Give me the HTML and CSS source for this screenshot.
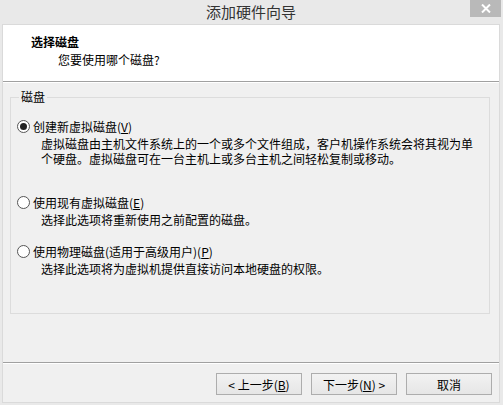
FILE: index.html
```html
<!DOCTYPE html>
<html lang="zh-CN">
<head>
    <meta charset="utf-8">
    <title>添加硬件向导</title>
    <link rel="stylesheet" href="styles.css">
</head>
<body>

<div id="window">
    <!-- Title bar -->
    <div id="title-bar">
        <span id="title-text">添加硬件向导</span>
        <button id="close-button">
            <svg width="10" height="9" viewBox="0 0 10 9">
                <path d="M1 0.5 L9 8.5 M9 0.5 L1 8.5" stroke="#fff" stroke-width="2"/>
            </svg>
        </button>
    </div>

    <div id="client">
        <!-- Wizard header -->
        <div id="header-box">
            <h1 id="page-title">选择磁盘</h1>
            <p id="page-subtitle">您要使用哪个磁盘?</p>
        </div>

        <div id="main">
            <fieldset class="group">
                <legend>磁盘</legend>

                <label class="option">
                    <span class="radio checked"></span>
                    <span class="option-label">创建新虚拟磁盘(<u>V</u>)</span>
                </label>
                <p class="desc">虚拟磁盘由主机文件系统上的一个或多个文件组成，客户机操作系统会将其视为单个硬盘。虚拟磁盘可在一台主机上或多台主机之间轻松复制或移动。</p>

                <label class="option">
                    <span class="radio"></span>
                    <span class="option-label">使用现有虚拟磁盘(<u>E</u>)</span>
                </label>
                <p class="desc">选择此选项将重新使用之前配置的磁盘。</p>

                <label class="option">
                    <span class="radio"></span>
                    <span class="option-label">使用物理磁盘(适用于高级用户)(<u>P</u>)</span>
                </label>
                <p class="desc">选择此选项将为虚拟机提供直接访问本地硬盘的权限。</p>
            </fieldset>
        </div>

        <!-- Buttons -->
        <div id="footer">
            <button class="wiz-button">&lt; 上一步(<u>B</u>)</button>
            <button class="wiz-button">下一步(<u>N</u>) &gt;</button>
            <button class="wiz-button">取消</button>
        </div>
    </div>
</div>

</body>
</html>
```

FILE: styles.css
```css
body {
    margin: 0;
    padding: 0;
    font-family: "Noto Sans CJK SC", "Noto Sans", sans-serif;
    font-size: 12px;
    color: #000;
}

#window {
    width: 503px;
    height: 405px;
    background-color: #e9e9e9;
    box-sizing: border-box;
    padding: 0 4px 3px 3px;
    display: flex;
    flex-direction: column;
}

#title-bar {
    height: 25px;
    position: relative;
    display: flex;
    justify-content: center;
    align-items: center;
}

#title-text {
    font-size: 15px;
    color: #333;
    margin-top: -2px;
}

#close-button {
    position: absolute;
    top: 0;
    right: -2px;
    width: 31px;
    height: 17px;
    border: none;
    padding: 0;
    background-color: #b9b9b9;
    display: flex;
    align-items: center;
    justify-content: center;
}

#client {
    flex: 1;
    background-color: #f0f0f0;
    display: flex;
    flex-direction: column;
    outline: 1px solid #dadada;
}

#header-box {
    height: 57px;
    background-color: #fff;
    border-bottom: 1px solid #a0a0a0;
    box-sizing: border-box;
    padding: 8px 0 0 28px;
}

#page-title {
    font-size: 12px;
    font-weight: 700;
    margin: 0;
    line-height: 17px;
}

#page-subtitle {
    margin: 1px 0 0 27px;
    line-height: 17px;
}

#main {
    flex: 1;
    border-top: 1px solid #fff;
    border-bottom: 1px solid #a0a0a0;
    padding: 7px 9px 0 7px;
}

.group {
    margin: 0;
    height: 224px;
    box-sizing: border-box;
    border: 1px solid #dcdcdc;
    padding: 14px 0 0 6px;
}

.group legend {
    padding: 0 2px;
    margin-left: 2px;
    line-height: 14px;
}

.option {
    display: flex;
    align-items: center;
    gap: 3px;
    height: 16px;
}

.radio {
    width: 11px;
    height: 11px;
    border: 1px solid #555;
    border-radius: 50%;
    background-color: #fff;
    position: relative;
}

.radio.checked::after {
    content: "";
    position: absolute;
    left: 2px;
    top: 2px;
    width: 7px;
    height: 7px;
    border-radius: 50%;
    background-color: #222;
}

.desc {
    margin: 2px 0 0 24px;
    line-height: 15px;
    width: 436px;
}

.desc + .option {
    margin-top: 16px;
}

.group .desc:nth-of-type(1) {
    margin-bottom: 28px;
}

#footer {
    height: 39px;
    border-top: 1px solid #fff;
    display: flex;
    justify-content: flex-end;
    gap: 9px;
    padding: 9px 7px 0 0;
    box-sizing: border-box;
}

.wiz-button {
    width: 86px;
    height: 22px;
    border: 1px solid #adadad;
    background: linear-gradient(#f2f2f2, #e6e6e6);
    font-family: inherit;
    font-size: 12px;
    padding: 0;
    color: #000;
}
```
